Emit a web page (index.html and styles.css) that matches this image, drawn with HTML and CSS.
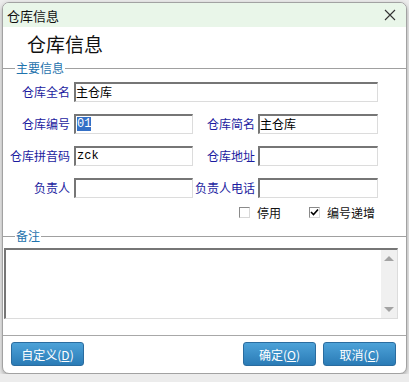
FILE: index.html
```html
<!doctype html>
<html>
  <head>
    <meta charset="utf-8">
    <title>仓库信息</title>
    <link rel="stylesheet" href="styles.css">
  </head>
  <body>
    <div class="window">

      <div class="titlebar">
        <span class="title">仓库信息</span>
        <svg class="close" width="12" height="12" viewBox="0 0 12 12">
          <path d="M1 1 L11 11 M11 1 L1 11" stroke="#333" stroke-width="1.1" fill="none"/>
        </svg>
      </div>

      <div class="heading">仓库信息</div>

      <div class="group-line"><span class="group-label">主要信息</span></div>

      <div class="form-grid">
        <div class="lbl">仓库全名</div>
        <div class="field wide">主仓库</div>

        <div class="lbl">仓库编号</div>
        <div class="field latin"><span class="selected">01</span></div>
        <div class="lbl lbl-right">仓库简名</div>
        <div class="field">主仓库</div>

        <div class="lbl">仓库拼音码</div>
        <div class="field latin">zck</div>
        <div class="lbl lbl-right">仓库地址</div>
        <div class="field"></div>

        <div class="lbl">负责人</div>
        <div class="field"></div>
        <div class="lbl lbl-right">负责人电话</div>
        <div class="field"></div>
      </div>

      <div class="checks">
        <div class="check"><span class="box"></span>停用</div>
        <div class="check"><span class="box">
          <svg width="9" height="9" viewBox="0 0 9 9"><path d="M1 4 L3.5 6.5 L8 1.5" stroke="#000" stroke-width="1.6" fill="none"/></svg>
        </span>编号递增</div>
      </div>

      <div class="group-line memo-line"><span class="group-label">备注</span></div>

      <div class="memo">
        <div class="memo-text"></div>
        <div class="scrollbar">
          <span class="arrow up"></span>
          <span class="arrow down"></span>
        </div>
      </div>

      <div class="footer">
        <button class="btn">自定义(<u>D</u>)</button>
        <div class="spacer"></div>
        <button class="btn">确定(<u>O</u>)</button>
        <button class="btn">取消(<u>C</u>)</button>
      </div>

    </div>
  </body>
</html>
```

FILE: styles.css
```css
body {
  margin: 0;
  background: #ececec;
  font-family: "Noto Sans CJK SC", "Noto Sans", sans-serif;
  font-size: 12px;
}

.window {
  margin: 2px 0 0 2px;
  width: 403px;
  border: 1px solid #a2a2a2;
  border-radius: 7px;
  background: #fff;
  overflow: hidden;
  box-shadow: 0 2px 5px rgba(0, 0, 0, 0.3);
}

.titlebar {
  height: 24px;
  background: #e9f6e9;
  display: flex;
  align-items: center;
  padding: 0 10px 0 4px;
}

.title {
  flex: 1;
  font-size: 13px;
  color: #111;
}

.heading {
  margin-top: 5px;
  padding-left: 24px;
  height: 24px;
  line-height: 24px;
  font-size: 19px;
  color: #111;
}

.group-line {
  margin-top: 5px;
  height: 14px;
  display: flex;
  align-items: center;
}

.group-line::before {
  content: "";
  width: 12px;
  border-top: 1px solid #a0a0a0;
}

.group-line::after {
  content: "";
  flex: 1;
  border-top: 1px solid #a0a0a0;
}

.group-label {
  color: #1f73ad;
  padding: 0 1px;
  line-height: 14px;
}

.form-grid {
  margin-top: 7px;
  display: grid;
  grid-template-columns: 71px 119px 65px 120px;
  grid-auto-rows: 20px;
  row-gap: 12px;
}

.lbl {
  color: #1c1ca0;
  text-align: right;
  padding-right: 4px;
  line-height: 20px;
  white-space: nowrap;
}

.lbl-right {
  padding-right: 3px;
}

.field {
  box-sizing: border-box;
  border-top: 2px solid #767676;
  border-left: 2px solid #767676;
  border-right: 1px solid #dcdcdc;
  border-bottom: 1px solid #dcdcdc;
  line-height: 16px;
  padding-left: 0;
  color: #000;
  overflow: hidden;
}

.wide {
  grid-column: 2 / 5;
}

.latin {
  font-family: "Liberation Mono", monospace;
  font-size: 12px;
  padding-left: 1px;
}

.selected {
  background: #3470c6;
  color: #fff;
}

.checks {
  margin-top: 7px;
  height: 15px;
  display: flex;
  align-items: center;
  padding-left: 236px;
  gap: 28px;
}

.check {
  display: flex;
  align-items: center;
  gap: 7px;
  color: #111;
}

.box {
  box-sizing: border-box;
  width: 11px;
  height: 11px;
  border-top: 1px solid #8a8a8a;
  border-left: 1px solid #8a8a8a;
  border-right: 1px solid #d8d8d8;
  border-bottom: 1px solid #d8d8d8;
  display: flex;
  align-items: center;
  justify-content: center;
}

.memo-line {
  margin-top: 9px;
}

.memo {
  margin: 5px 8px 0 1px;
  height: 71px;
  box-sizing: border-box;
  border-top: 2px solid #767676;
  border-left: 2px solid #767676;
  border-right: 1px solid #dcdcdc;
  border-bottom: 1px solid #dcdcdc;
  display: flex;
}

.memo-text {
  flex: 1;
}

.scrollbar {
  width: 16px;
  background: #f0f0f0;
  display: flex;
  flex-direction: column;
  justify-content: space-between;
  align-items: center;
  padding: 6px 0 6px;
}

.arrow {
  width: 0;
  height: 0;
  border-left: 5px solid transparent;
  border-right: 5px solid transparent;
}

.up {
  border-bottom: 5px solid #a3a3a3;
}

.down {
  border-top: 5px solid #a3a3a3;
}

.footer {
  margin-top: 16px;
  border-top: 1px solid #a8a8a8;
  padding: 6px 10px 7px 8px;
  display: flex;
  gap: 7px;
}

.spacer {
  flex: 1;
}

.btn {
  width: 73px;
  height: 24px;
  padding: 0;
  border: 1px solid #2a6c9f;
  border-radius: 3px;
  background: linear-gradient(#4da2d8, #2a7bb6);
  color: #fff;
  font-family: "Noto Sans CJK SC", "Noto Sans", sans-serif;
  font-size: 12px;
}
```
